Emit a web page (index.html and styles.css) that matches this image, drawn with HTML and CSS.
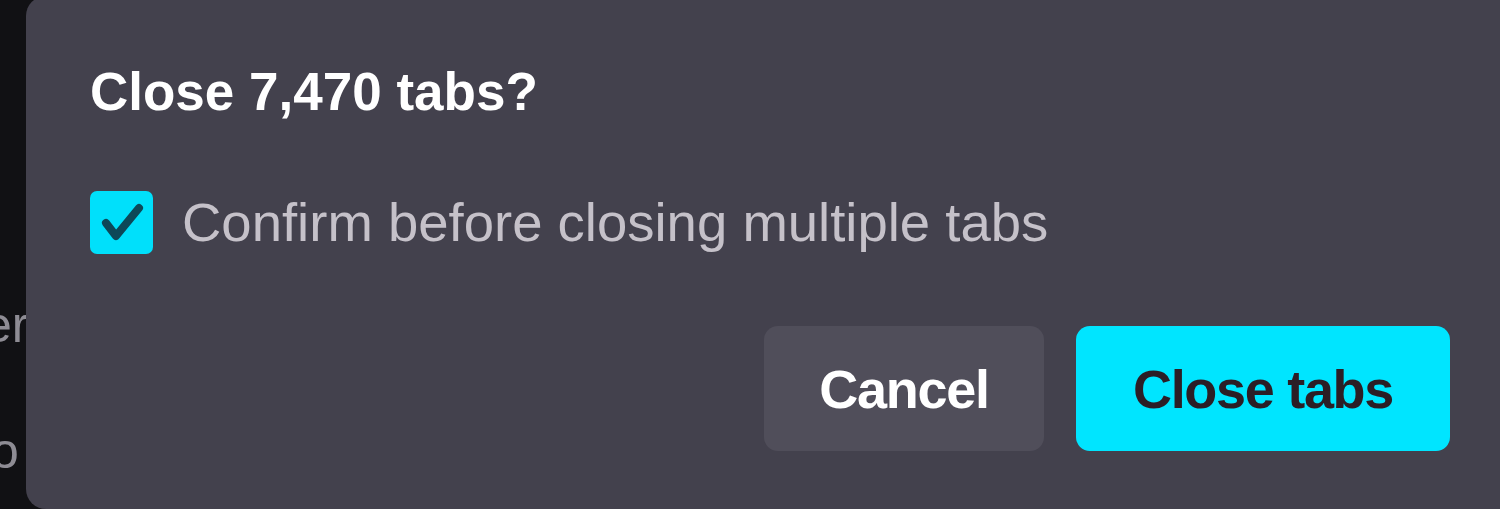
FILE: index.html
```html
<!DOCTYPE html>
<html>
<head>
<meta charset="utf-8">
<link rel="stylesheet" href="styles.css">
</head>
<body>
<div class="page">
  <div class="behind">
    <span class="ghost ghost-er">er</span>
    <span class="ghost ghost-o">o</span>
  </div>
  <div class="dialog">
    <h1 class="title">Close 7,470 tabs?</h1>
    <label class="confirm">
      <span class="check">
        <svg width="63" height="63" viewBox="0 0 63 63"><path d="M16 32 L26 45 L49 17" fill="none" stroke="#0d4858" stroke-width="8" stroke-linecap="round" stroke-linejoin="round"/></svg>
      </span>
      <span class="confirm-text">Confirm before closing multiple tabs</span>
    </label>
    <div class="actions">
      <button class="btn btn-cancel">Cancel</button>
      <button class="btn btn-close">Close tabs</button>
    </div>
  </div>
</div>
</body>
</html>
```
FILE: styles.css
```css
html, body {
  margin: 0;
  padding: 0;
  width: 1500px;
  height: 509px;
  overflow: hidden;
  background: #111114;
  font-family: "Liberation Sans", Arial, sans-serif;
}
.page {
  display: flex;
  height: 509px;
}
.behind {
  width: 26px;
  flex: none;
  position: relative;
  background: #111114;
  overflow: hidden;
}
.ghost {
  position: absolute;
  color: #8e8c94;
  font-size: 50px;
  line-height: 1;
}
.ghost-er { left: -16px; top: 300px; }
.ghost-o { left: -9px; top: 426px; }
.dialog {
  flex: none;
  width: 1520px;
  height: 513px;
  margin-top: -4px;
  background: #43414d;
  border-radius: 20px;
  box-sizing: border-box;
  padding: 66px 0 0 64px;
}
.title {
  margin: 0;
  font-size: 53px;
  font-weight: 700;
  color: #ffffff;
  line-height: 60px;
}
.confirm {
  display: flex;
  align-items: center;
  margin-top: 69px;
  gap: 29px;
}
.check {
  width: 63px;
  height: 63px;
  border-radius: 7px;
  background: #00e0fb;
  display: flex;
}
.confirm-text {
  font-size: 54.5px;
  color: #c5c1c9;
}
.actions {
  display: flex;
  gap: 32px;
  margin-top: 72px;
  padding-left: 674px;
}
.btn {
  border: none;
  height: 125px;
  border-radius: 14px;
  font-family: "Liberation Sans", Arial, sans-serif;
  font-size: 54px;
  font-weight: 700;
  letter-spacing: -1.3px;
  padding: 0;
}
.btn-cancel {
  width: 280px;
  background: #504e5a;
  color: #ffffff;
}
.btn-close {
  width: 374px;
  background: #00e5ff;
  color: #2b1e26;
}
```
